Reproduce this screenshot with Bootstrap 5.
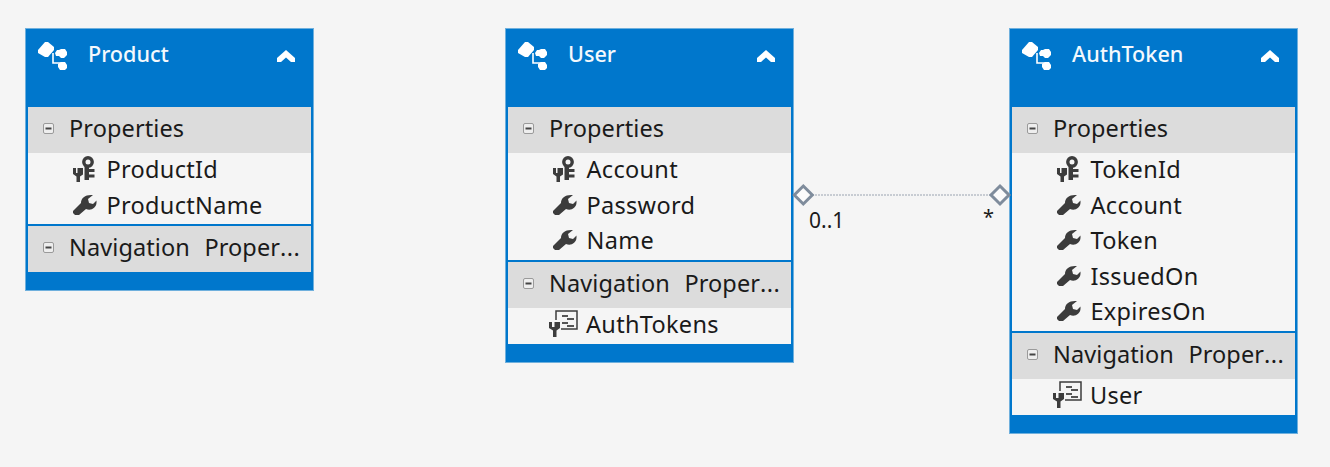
<!DOCTYPE html>
<html lang="en">
<head>
<meta charset="utf-8">
<title>Entity diagram</title>
<link href="https://cdn.jsdelivr.net/npm/bootstrap@5.3.0/dist/css/bootstrap.min.css" rel="stylesheet">
<style>
html,body{margin:0;background:#f5f5f5;overflow:hidden}
.canvas{position:relative;width:1330px;height:467px;background:#f5f5f5;font-family:"Noto Sans","Open Sans",sans-serif;color:#1a1a1a}
.entity{position:absolute;top:28px;width:289px;background:#0077cc;border:1px solid #6fb0dd;padding:0 2px 18px}
.e-product{left:25px}.e-user{left:505px}.e-token{left:1009px}
.ehead{height:78px;padding:10px 0 0 9px;color:#fff;position:relative}
.ehead .ename{font-size:21.6px;font-weight:500;line-height:30px;margin-left:51px;color:#f4f9fd}
.ehead .eicon{position:absolute;left:9px;top:11px}
.ehead .echev{position:absolute;right:16px;top:21px}
.sect{height:46px;background:#dcdcdc;padding-left:15px;font-size:23.5px;line-height:42px;letter-spacing:.1px;word-spacing:1px;white-space:pre}
.sect svg{margin-right:15px;vertical-align:3px}
.sect .dots{letter-spacing:.4px}
.rows{background:#f5f5f5;padding:0 0 0 45px}
.rowitem{height:35.5px;font-size:23.5px;line-height:32px;letter-spacing:.3px;padding-bottom:3px}
.rowitem svg{margin-right:9.500px;flex:none}
.rowitem svg.navic{margin-left:-4px;margin-right:7px}
.rows-nav{height:36px}
.sep{border-top:2px solid #0077cc}
.assoc{position:absolute;left:0;top:0;z-index:2}
.mult{position:absolute;font-size:21px;line-height:28px;color:#1a1a1a}
.m1{left:809px;top:206px}
.m2{left:983px;top:203px;font-size:20px}
</style>
</head>
<body>
<svg width="0" height="0" class="d-block position-absolute">
  <defs>
    <symbol id="ent" viewBox="0 0 32 32">
      <path d="M1 10 8 2h3l6 5v3l-6 7H8L1 13z" fill="#fff"/>
      <path d="M16 13V23H25" fill="none" stroke="#fff" stroke-width="1.600"/>
      <path d="M18 13l2-3h2l2-1h4l2 3v3l-3 3h-3l-2-2h-3z" fill="#fff"/>
      <path d="M21 24l3-2h4l2 3v3l-2 2h-5l-2-3z" fill="#fff"/>
    </symbol>
    <symbol id="key" viewBox="0 0 24 26">
      <path d="M0 12h3v5h1.500v-5H7.500V12H10v6.500L7 20.500V26H3.500V20.500L0 18z" fill="#3c3c3c"/>
      <circle cx="15" cy="6" r="4.200" fill="none" stroke="#3c3c3c" stroke-width="3.400"/>
      <path d="M11.500 10h4.500v3H21.500v3H16v2.500h5.500v3H16V24h-4.500z" fill="#3c3c3c"/>
    </symbol>
    <symbol id="wrench" viewBox="0 0 24 22">
      <path d="M0 17 8 9C8 4 12 1 18 1h2l-5 4 1 4 4 1 3.500-3.500V9C23 14 18 17 13 15L6 21H2L0 19z" fill="#3c3c3c"/>
    </symbol>
    <symbol id="nav" viewBox="0 0 30 30">
      <path d="M0 13h3v5h2.500v-5H8.500L11 13v6L7.500 21.500V28H4V21.500L0 19z" fill="#3c3c3c"/>
      <path d="M7 11V2h21v18H12" fill="none" stroke="#3c3c3c" stroke-width="1.500"/>
      <path d="M13 6h6v2h-6zM18 9h7v2h-7zM13 13h6v2h-6zM18 16h7v2h-7z" fill="#555"/>
    </symbol>
    <symbol id="minus" viewBox="0 0 11 11">
      <rect x=".5" y=".5" width="10" height="10" rx="1.500" fill="#eee" stroke="#9a9a9a"/>
      <rect x="2.500" y="4.500" width="6" height="2" fill="#444"/>
    </symbol>
    <symbol id="chev" viewBox="0 0 18 12">
      <path d="M9 0 18 8v4h-4L9 7.500 4 12H0V8z" fill="#fff"/>
    </symbol>
  </defs>
</svg>

<div class="canvas">
  <svg class="assoc" width="1330" height="467">
    <line x1="812" y1="195" x2="990" y2="195" stroke="#9aa3b0" stroke-width="1" stroke-dasharray="2 1"/>
    <path d="M803.300 186 812.300 195 803.300 204 794.300 195z" fill="#fbfbfb" stroke="#7f8c9c" stroke-width="3"/>
    <path d="M1000 186 1009 195 1000 204 991 195z" fill="#fbfbfb" stroke="#7f8c9c" stroke-width="3"/>
  </svg>
  <div class="mult m1">0..1</div>
  <div class="mult m2">*</div>

  <div class="entity e-product">
    <div class="ehead">
      <svg class="eicon" width="32" height="32"><use href="#ent"/></svg>
      <div class="ename">Product</div>
      <svg class="echev" width="18" height="12"><use href="#chev"/></svg>
    </div>
    <div class="sect"><svg width="11" height="11"><use href="#minus"/></svg>Properties</div>
    <div class="rows">
      <div class="rowitem d-flex align-items-center"><svg width="24" height="26"><use href="#key"/></svg>ProductId</div>
      <div class="rowitem d-flex align-items-center"><svg width="24" height="22"><use href="#wrench"/></svg>ProductName</div>
    </div>
    <div class="sep"></div>
    <div class="sect"><svg width="11" height="11"><use href="#minus"/></svg>Navigation  Proper<span class="dots">...</span></div>
  </div>

  <div class="entity e-user">
    <div class="ehead">
      <svg class="eicon" width="32" height="32"><use href="#ent"/></svg>
      <div class="ename">User</div>
      <svg class="echev" width="18" height="12"><use href="#chev"/></svg>
    </div>
    <div class="sect"><svg width="11" height="11"><use href="#minus"/></svg>Properties</div>
    <div class="rows">
      <div class="rowitem d-flex align-items-center"><svg width="24" height="26"><use href="#key"/></svg>Account</div>
      <div class="rowitem d-flex align-items-center"><svg width="24" height="22"><use href="#wrench"/></svg>Password</div>
      <div class="rowitem d-flex align-items-center"><svg width="24" height="22"><use href="#wrench"/></svg>Name</div>
    </div>
    <div class="sep"></div>
    <div class="sect"><svg width="11" height="11"><use href="#minus"/></svg>Navigation  Proper<span class="dots">...</span></div>
    <div class="rows rows-nav">
      <div class="rowitem d-flex align-items-center"><svg class="navic" width="30" height="30"><use href="#nav"/></svg>AuthTokens</div>
    </div>
  </div>

  <div class="entity e-token">
    <div class="ehead">
      <svg class="eicon" width="32" height="32"><use href="#ent"/></svg>
      <div class="ename">AuthToken</div>
      <svg class="echev" width="18" height="12"><use href="#chev"/></svg>
    </div>
    <div class="sect"><svg width="11" height="11"><use href="#minus"/></svg>Properties</div>
    <div class="rows">
      <div class="rowitem d-flex align-items-center"><svg width="24" height="26"><use href="#key"/></svg>TokenId</div>
      <div class="rowitem d-flex align-items-center"><svg width="24" height="22"><use href="#wrench"/></svg>Account</div>
      <div class="rowitem d-flex align-items-center"><svg width="24" height="22"><use href="#wrench"/></svg>Token</div>
      <div class="rowitem d-flex align-items-center"><svg width="24" height="22"><use href="#wrench"/></svg>IssuedOn</div>
      <div class="rowitem d-flex align-items-center"><svg width="24" height="22"><use href="#wrench"/></svg>ExpiresOn</div>
    </div>
    <div class="sep"></div>
    <div class="sect"><svg width="11" height="11"><use href="#minus"/></svg>Navigation  Proper<span class="dots">...</span></div>
    <div class="rows rows-nav">
      <div class="rowitem d-flex align-items-center"><svg class="navic" width="30" height="30"><use href="#nav"/></svg>User</div>
    </div>
  </div>
</div>
<script src="https://cdn.jsdelivr.net/npm/bootstrap@5.3.0/dist/js/bootstrap.bundle.min.js"></script>
</body>
</html>
